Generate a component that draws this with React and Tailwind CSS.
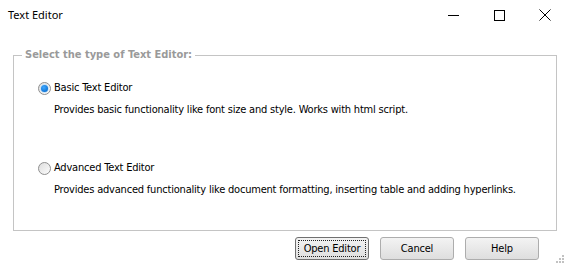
import React, { useState } from "react";

function Radio({ checked }) {
  return (
    <svg width="13" height="13" viewBox="0 0 13 13" className="shrink-0">
      <defs>
        <linearGradient id="rbg" x1="0" y1="0" x2="1" y2="1">
          <stop offset="0" stopColor="#dcdcdc" />
          <stop offset="1" stopColor="#fdfdfd" />
        </linearGradient>
        <radialGradient id="rdot" cx="0.4" cy="0.35" r="0.7">
          <stop offset="0" stopColor="#3fa8ff" />
          <stop offset="1" stopColor="#0a6fd1" />
        </radialGradient>
      </defs>
      <circle cx="6.5" cy="6.5" r="6" fill="url(#rbg)" stroke="#8f8f8f" strokeWidth="1" />
      {checked && (
        <>
          <circle cx="6.5" cy="6.5" r="4.4" fill="#c6e2f8" />
          <circle cx="6.5" cy="6.5" r="3.5" fill="url(#rdot)" />
        </>
      )}
    </svg>
  );
}

function Option({ checked, label, desc, onPick }) {
  return (
    <div className="flex flex-col cursor-default tracking-[-0.2px]" onClick={onPick}>
      <div className="flex items-center h-[14px] ml-[24px] gap-[3px]">
        <Radio checked={checked} />
        <span>{label}</span>
      </div>
      <div className="ml-[40px] mt-[8px] h-[14px] leading-[14px]">{desc}</div>
    </div>
  );
}

function DlgButton({ children, focused }) {
  return (
    <button
      className={`w-[74px] h-[23px] rounded-[3px] border bg-gradient-to-b from-[#f3f3f3] to-[#dedede] text-black flex items-center justify-center p-[3px] tracking-[-0.2px] ${
        focused ? "border-[#707070]" : "border-[#adadad]"
      }`}
    >
      <span
        className={`w-full h-full flex items-center justify-center leading-none ${
          focused ? "outline outline-1 outline-dotted outline-[#222]" : ""
        }`}
      >
        {children}
      </span>
    </button>
  );
}

export default function App() {
  const [choice, setChoice] = useState("basic");

  return (
    <div className="w-[568px] h-[267px] bg-white relative overflow-hidden text-[11px] text-black font-['DejaVu_Sans_Condensed','DejaVu_Sans',sans-serif]">
      {/* title bar */}
      <div className="h-[30px] flex items-center justify-between">
        <span className="pl-[8px] text-[11px] font-['Noto_Sans','Open_Sans',sans-serif]">Text Editor</span>
        <div className="flex h-full">
          <div className="w-[46px] h-full flex items-center justify-center">
            <svg width="11" height="11" viewBox="0 0 11 11">
              <path d="M0 5.5H11" stroke="#000" strokeWidth="1" />
            </svg>
          </div>
          <div className="w-[46px] h-full flex items-center justify-center">
            <svg width="11" height="11" viewBox="0 0 11 11">
              <rect x="0.5" y="0.5" width="10" height="10" fill="none" stroke="#000" strokeWidth="1" />
            </svg>
          </div>
          <div className="w-[46px] h-full flex items-center justify-center">
            <svg width="12" height="12" viewBox="0 0 12 12">
              <path d="M0.5 0.5L11.5 11.5M11.5 0.5L0.5 11.5" stroke="#000" strokeWidth="1" />
            </svg>
          </div>
        </div>
      </div>

      {/* group box */}
      <fieldset className="mt-[18px] ml-[13px] w-[544px] h-[183px] border border-[#c4c4c4]">
        <legend className="ml-[8px] px-[3px] h-[14px] leading-[14px] font-bold text-[#9a9a9a]">
          Select the type of Text Editor:
        </legend>
        <div className="flex flex-col gap-[44px] mt-[19px]">
          <Option
            checked={choice === "basic"}
            label="Basic Text Editor"
            desc="Provides basic functionality like font size and style. Works with html script."
            onPick={() => setChoice("basic")}
          />
          <Option
            checked={choice === "advanced"}
            label="Advanced Text Editor"
            desc="Provides advanced functionality like document formatting, inserting table and adding hyperlinks."
            onPick={() => setChoice("advanced")}
          />
        </div>
      </fieldset>

      {/* buttons */}
      <div className="flex gap-[11px] ml-[295px] mt-[6px]">
        <DlgButton focused>Open Editor</DlgButton>
        <DlgButton>Cancel</DlgButton>
        <DlgButton>Help</DlgButton>
      </div>

      {/* size grip */}
      <svg width="9" height="9" viewBox="0 0 9 9" className="absolute right-[3px] bottom-[3px]">
        {[
          [6, 0],
          [3, 3],
          [6, 3],
          [0, 6],
          [3, 6],
          [6, 6],
        ].map(([x, y]) => (
          <rect key={`${x}-${y}`} x={x} y={y} width="2" height="2" fill="#c2c2c2" />
        ))}
      </svg>
    </div>
  );
}
